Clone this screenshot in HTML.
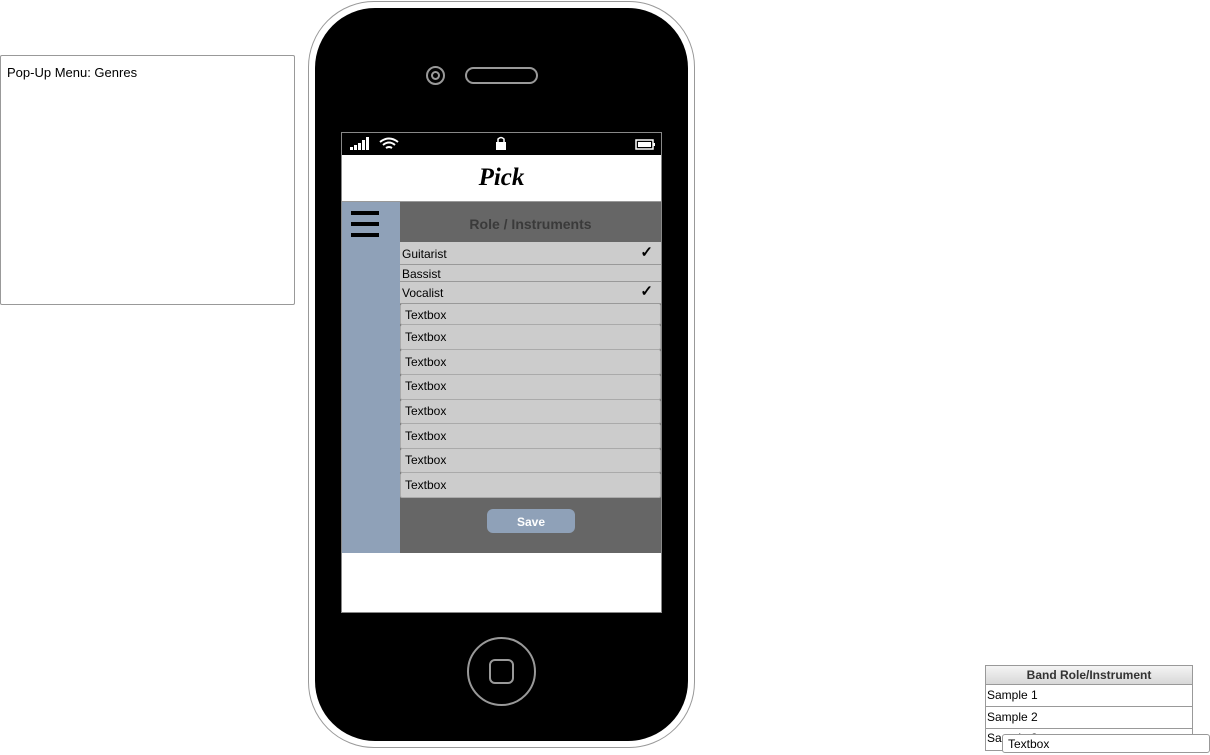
<!DOCTYPE html>
<html><head><style>
*{margin:0;padding:0;box-sizing:border-box}
body{width:1210px;height:755px;background:#fff;position:relative;overflow:hidden;font-family:"Liberation Sans",Arial,sans-serif;font-size:12px}
.a{position:absolute}
.row{position:absolute;left:400px;width:261px;background:#ccc;border-bottom:1px solid #999;color:#000;font-size:12px}
.tb{border:1px solid #aaa;border-top:none;border-radius:2px;padding-left:4px}
</style></head><body>
<div class="a" style="left:0;top:55px;width:295px;height:250px;border:1px solid #999;border-radius:2px;padding:9px 6px;font-size:13px">Pop-Up Menu: Genres</div>

<div class="a" style="left:308px;top:1px;width:387px;height:747px;border:1px solid #999;border-radius:66px;background:#fff"></div>
<div class="a" style="left:315px;top:8px;width:373px;height:733px;border-radius:60px;background:#000"></div>
<div class="a" style="left:426px;top:66px;width:19px;height:19px;border:2px solid #999;border-radius:50%"></div>
<div class="a" style="left:431px;top:71px;width:9px;height:9px;border:2px solid #999;border-radius:50%"></div>
<div class="a" style="left:465px;top:67px;width:73px;height:17px;border:2px solid #999;border-radius:9px"></div>
<div class="a" style="left:467px;top:637px;width:69px;height:69px;border:2px solid #999;border-radius:50%"></div>
<div class="a" style="left:489px;top:659px;width:25px;height:25px;border:2px solid #999;border-radius:6px"></div>

<div class="a" style="left:341px;top:132px;width:321px;height:481px;background:#fff;border:1px solid #888"></div>
<div class="a" style="left:342px;top:133px;width:319px;height:22px;background:#000"></div>
<svg class="a" style="left:348px;top:136px" width="330" height="16">
<rect x="2" y="11" width="3" height="3" fill="#fff"/><rect x="6" y="9" width="3" height="5" fill="#fff"/><rect x="10" y="7" width="3" height="7" fill="#fff"/><rect x="14" y="4" width="3" height="10" fill="#fff"/><rect x="18" y="1" width="3" height="13" fill="#fff"/>
<path d="M32 6 Q41 -1 50 6 M35 9 Q41 4 47 9 M38 12 Q41 10 44 12" stroke="#fff" stroke-width="2" fill="none"/>
<rect x="148" y="6" width="10" height="8" fill="#fff"/><path d="M150 6 V3 Q153 0 156 3 V6" stroke="#fff" stroke-width="1.5" fill="none"/>
<rect x="288" y="4" width="17" height="9" stroke="#fff" stroke-width="1.5" fill="none"/><rect x="290" y="6" width="13" height="5" fill="#fff"/><rect x="305" y="7" width="2" height="3" fill="#fff"/>
</svg>
<div class="a" style="left:342px;top:160px;width:319px;text-align:center;font-family:'Liberation Serif',serif;font-style:italic;font-weight:bold;font-size:25px;line-height:36px">Pick</div>
<div class="a" style="left:342px;top:201px;width:319px;height:1px;background:#999"></div>
<div class="a" style="left:342px;top:202px;width:58px;height:351px;background:#8fa1b8"></div>
<div class="a" style="left:351px;top:211px;width:28px;height:4px;background:#000"></div>
<div class="a" style="left:351px;top:222px;width:28px;height:4px;background:#000"></div>
<div class="a" style="left:351px;top:233px;width:28px;height:4px;background:#000"></div>
<div class="a" style="left:400px;top:202px;width:261px;height:351px;background:#666"></div>
<div class="a" style="left:400px;top:216px;width:261px;text-align:center;font-weight:bold;font-size:14px;color:#3a3a3a">Role / Instruments</div>

<div class="row" style="top:242px;height:23px;padding:5px 2px">Guitarist<span style="position:absolute;right:8px;top:1px;font-size:15px;font-weight:bold">✓</span></div>
<div class="row" style="top:265px;height:17px;padding:2px 2px">Bassist</div>
<div class="row" style="top:282px;height:22px;padding:4px 2px">Vocalist<span style="position:absolute;right:8px;top:0px;font-size:15px;font-weight:bold">✓</span></div>
<div class="row tb" style="top:304px;height:21px;padding-top:4px">Textbox</div>
<div class="row tb" style="top:325px;height:25px;padding-top:5px">Textbox</div>
<div class="row tb" style="top:350px;height:25px;padding-top:5px">Textbox</div>
<div class="row tb" style="top:375px;height:25px;padding-top:4px">Textbox</div>
<div class="row tb" style="top:400px;height:24px;padding-top:4px">Textbox</div>
<div class="row tb" style="top:424px;height:25px;padding-top:5px">Textbox</div>
<div class="row tb" style="top:449px;height:24px;padding-top:4px">Textbox</div>
<div class="row tb" style="top:473px;height:25px;padding-top:5px">Textbox</div>
<div class="a" style="left:487px;top:509px;width:88px;height:24px;background:#8fa1b8;border-radius:6px;color:#fff;font-weight:bold;text-align:center;line-height:26px">Save</div>

<div class="a" style="left:985px;top:665px;width:208px;height:86px;border:1px solid #999;background:#fff"></div>
<div class="a" style="left:986px;top:666px;width:206px;height:19px;background:linear-gradient(#f4f4f4,#d8d8d8);border-bottom:1px solid #999;text-align:center;font-weight:bold;line-height:18px;color:#333">Band Role/Instrument</div>
<div class="a" style="left:986px;top:685px;width:206px;height:22px;border-bottom:1px solid #999;padding:3px 1px">Sample 1</div>
<div class="a" style="left:986px;top:707px;width:206px;height:22px;border-bottom:1px solid #999;padding:3px 1px">Sample 2</div>
<div class="a" style="left:986px;top:729px;width:206px;height:21px;padding:2px 1px">Sample 3</div>
<div class="a" style="left:1002px;top:734px;width:208px;height:19px;background:#fff;border:1px solid #999;border-radius:3px;padding:2px 5px">Textbox</div>
</body></html>
